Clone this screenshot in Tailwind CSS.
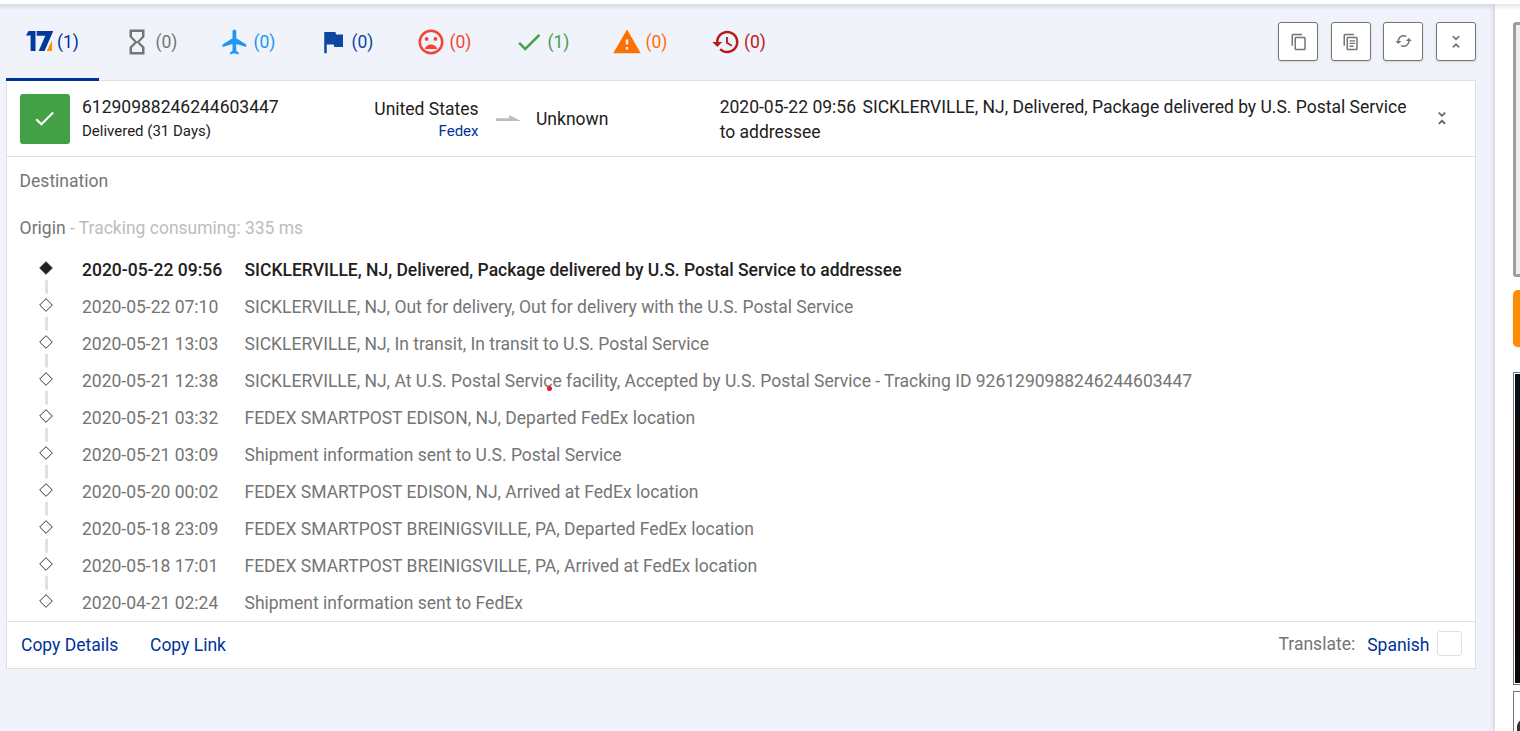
<!DOCTYPE html>
<html lang="en">
<head>
<meta charset="utf-8">
<title>17TRACK</title>
<script src="https://cdn.jsdelivr.net/npm/@tailwindcss/browser@4"></script>
</head>
<body class="h-[731px] w-[1520px] overflow-hidden bg-white pt-1 font-['Roboto',sans-serif] text-[17.5px] leading-[25px] text-[#212121]">
<div class="relative flex h-[727px] overflow-hidden">
  <div class="pointer-events-none absolute inset-x-0 top-0 z-10 h-[6px] bg-linear-to-b from-black/10 to-transparent"></div>
  <main class="w-[1495px] shrink-0 bg-[#f0f3fa] pl-[6px] pr-[19px]">
    <header class="flex h-[76px] justify-between">
      <nav class="flex">
        <div class="relative z-10 flex h-[77px] w-[93px] items-center border-b-[3px] border-[#003399] pl-5 text-[#003399]">
          <svg class="mr-[3px] h-[21px] w-[28px]" viewBox="0 0 28 21"><path fill="#003a9b" d="M2.500 0H9.500v20H4.600V4.600H0zM10.700 0H27.300L18.500 20H12.700L19.300 4.800H10.700z"/><path fill="#ff9100" d="M26 9.500V20H20.800z"/></svg>
          <span class="pt-[2px]">(1)</span>
        </div>
        <div class="ml-[23px] flex h-[77px] w-[98px] items-center gap-[3.5px] pb-[2px] text-[#757575]">
          <svg class="size-[30px]" viewBox="0 0 24 24" fill="currentColor"><path d="M6 2v6l4 4-4 4v6h12v-6l-4-4 4-4V2H6zm10 14.500V20H8v-3.500l4-4 4 4zm-4-5l-4-4V4h8v3.500l-4 4z"/></svg><span class="pt-[2px]">(0)</span>
        </div>
        <div class="flex h-[77px] w-[98px] items-center gap-[3.5px] pb-[2px] text-[#2196f3]">
          <svg class="size-[30px]" viewBox="0 0 24 24" fill="currentColor"><path d="M21 16v-2l-8-5V3.500c0-.83-.67-1.500-1.500-1.500S10 2.670 10 3.500V9l-8 5v2l8-2.500V19l-2 1.500V22l3.500-1 3.500 1v-1.500L13 19v-5.500l8 2.500z"/></svg><span class="pt-[2px]">(0)</span>
        </div>
        <div class="flex h-[77px] w-[98px] items-center gap-[3.5px] pb-[2px] text-[#0d47a1]">
          <svg class="size-[30px]" viewBox="0 0 24 24" fill="currentColor"><path d="M14.400 6L14 4H5v17h2v-7h5.600l.4 2h7V6z"/></svg><span class="pt-[2px]">(0)</span>
        </div>
        <div class="flex h-[77px] w-[98px] items-center gap-[3.5px] pb-[2px] text-[#f44336]">
          <svg class="size-[30px]" viewBox="0 0 24 24" fill="currentColor"><circle cx="12" cy="12" r="9" fill="none" stroke="currentColor" stroke-width="2"/><circle cx="15.500" cy="9.500" r="1.500"/><circle cx="8.500" cy="9.500" r="1.500"/><path d="M12 14c-2.330 0-4.310 1.460-5.110 3.500h10.220c-.8-2.040-2.780-3.500-5.110-3.500z"/></svg><span class="pt-[2px]">(0)</span>
        </div>
        <div class="flex h-[77px] w-[98px] items-center gap-[3.5px] pb-[2px] text-[#43a047]">
          <svg class="size-[30px]" viewBox="0 0 24 24" fill="currentColor"><path d="M9 16.170L4.830 12l-1.420 1.410L9 19 21 7l-1.410-1.410z"/></svg><span class="pt-[2px]">(1)</span>
        </div>
        <div class="flex h-[77px] w-[98px] items-center gap-[3.5px] pb-[2px] text-[#ff6f00]">
          <svg class="size-[30px]" viewBox="0 0 24 24" fill="currentColor"><path d="M1 21h22L12 2 1 21zm12-3h-2v-2h2v2zm0-4h-2v-4h2v4z"/></svg><span class="pt-[2px]">(0)</span>
        </div>
        <div class="ml-[.5px] flex h-[77px] w-[98px] items-center gap-[3.5px] pb-[2px] text-[#b71c1c]">
          <svg class="size-[30px]" viewBox="0 0 24 24" fill="currentColor"><path d="M13 3c-4.970 0-9 4.030-9 9H1l3.890 3.890.07.14L9 12H6c0-3.870 3.130-7 7-7s7 3.130 7 7-3.130 7-7 7c-1.930 0-3.680-.79-4.940-2.060l-1.420 1.420C8.270 19.990 10.510 21 13 21c4.970 0 9-4.030 9-9s-4.030-9-9-9zm-1 5v5l4.280 2.540.72-1.210-3.500-2.080V8H12z"/></svg><span class="pt-[2px]">(0)</span>
        </div>
      </nav>
      <div class="flex pt-[18px] text-[#757575]">
        <div class="mr-[13px] flex h-[39px] w-10 items-center justify-center rounded-[3px] border border-[#757575] bg-white pl-px shadow-sm"><svg class="size-[18px]" viewBox="0 0 24 24" fill="currentColor"><path d="M16 1H4c-1.100 0-2 .9-2 2v14h2V3h12V1zm3 4H8c-1.100 0-2 .9-2 2v14c0 1.100.9 2 2 2h11c1.100 0 2-.9 2-2V7c0-1.100-.9-2-2-2zm0 16H8V7h11v14z"/></svg></div>
        <div class="mr-3 flex h-[39px] w-10 items-center justify-center rounded-[3px] border border-[#757575] bg-white shadow-sm"><svg class="size-[18px]" viewBox="0 0 24 24" fill="currentColor"><path d="M16 1H4c-1.100 0-2 .9-2 2v14h2V3h12V1zm3 4H8c-1.100 0-2 .9-2 2v14c0 1.100.9 2 2 2h11c1.100 0 2-.9 2-2V7c0-1.100-.9-2-2-2zm0 16H8V7h11v14z"/><path d="M10 9.500h7.500v1.700H10zM10 13h7.500v1.700H10zM10 16.800h5.500v1.700H10z"/></svg></div>
        <div class="mr-[13px] flex h-[39px] w-10 items-center justify-center rounded-[3px] border border-[#757575] bg-white pb-px pl-px shadow-sm"><svg class="size-[18px]" viewBox="0 0 24 24" fill="currentColor"><g transform="translate(-.5 0)"><path d="M19 8l-4 4h3c0 3.310-2.690 6-6 6-1.010 0-1.970-.25-2.800-.7l-1.460 1.460C8.970 19.540 10.430 20 12 20c4.420 0 8-3.580 8-8h3l-4-4zM6 12c0-3.310 2.690-6 6-6 1.010 0 1.970.25 2.800.7l1.460-1.460C15.030 4.460 13.570 4 12 4c-4.420 0-8 3.580-8 8H1l4 4 4-4H6z"/></g></svg></div>
        <div class="flex h-[39px] w-10 items-center justify-center rounded-[3px] border border-[#757575] bg-white shadow-sm"><svg class="size-[18px]" viewBox="0 0 18 18" fill="none" stroke="currentColor" stroke-width="1.700"><path d="M5.800 3.200L9 6.300l3.200-3.100M5.800 14.400L9 11.300l3.200 3.100"/></svg></div>
      </div>
    </header>

    <section class="h-[589px] border border-[#e0e0e0] bg-white">
      <div class="flex h-[76px] border-b border-[#e0e0e0] pl-[13px]">
        <div class="mt-[13px] flex size-[50px] items-center justify-center rounded-[3px] bg-[#43a047] pb-px pr-px"><svg class="size-[25px]" viewBox="0 0 24 24" fill="#fff"><path d="M9 16.170L4.830 12l-1.420 1.410L9 19 21 7l-1.410-1.410z"/></svg></div>
        <div class="ml-3 w-[240px] pt-[14px]">
          <div>61290988246244603447</div>
          <div class="text-[15px] leading-[23px]">Delivered (31 Days)</div>
        </div>
        <div class="w-[156.5px] pt-[16px] text-right">
          <div>United States</div>
          <div class="text-[15px] leading-[19px] text-[#003399]">Fedex</div>
        </div>
        <svg class="ml-[17.5px] mt-[33px] h-[8px] w-[25px]" viewBox="0 0 25 8" fill="#bdbdbd"><path d="M0 4.300H13V1L25 7H0z"/></svg>
        <div class="ml-[15px] w-[183.7px] pt-[26px]">Unknown</div>
        <div class="w-[700px] pt-[14px]"><span class="mr-[6.6px]">2020-05-22 09:56</span>SICKLERVILLE, NJ, Delivered, Package delivered by U.S. Postal Service<br>to addressee</div>
        <svg class="ml-[13.3px] mt-[28px] size-[18px] shrink-0" viewBox="0 0 18 18" fill="none" stroke="#616161" stroke-width="1.700"><path d="M5.800 3.700L9 6.800l3.200-3.100M5.800 14.900L9 11.800l3.200 3.100"/></svg>
      </div>

      <div class="h-[464px] pl-[12.6px] pt-[12px] text-[#757575]">
        <div>Destination</div>
        <div class="mt-[22px]">Origin <span class="text-[#bdbdbd]">- Tracking consuming: 335 ms</span></div>
        <ol id="events" class="mt-5"></ol>
      </div>

      <footer class="flex h-[47px] items-center border-t border-[#e0e0e0] pl-[14px] pr-[13px] text-[#003399]">
        <span class="w-[129px]">Copy Details</span>
        <span>Copy Link</span>
        <span class="ml-auto mr-3 pb-[2px] text-[#757575]">Translate:</span>
        <span>Spanish</span>
        <span class="mb-[3px] ml-[7.5px] size-[25px] rounded-[3px] border border-[#e0e0e0]"></span>
      </footer>
    </section>
  </main>

  <aside class="flex w-[25px] shrink-0 flex-col pl-[18px] pt-[18px] shadow-[0_0_6px_rgba(0,0,0,0.22)]">
    <div class="h-[255px] w-[40px] shrink-0 rounded-[3px] border-[3px] border-[#9e9e9e] bg-[#eeeeee]"></div>
    <div class="mt-[13px] h-[57px] w-[40px] shrink-0 rounded-[5px] bg-[#ff8c00] shadow"></div>
    <div class="mt-[25px] h-[313px] w-[40px] shrink-0 border border-[#757575] p-px"><div class="h-full bg-linear-to-b from-[#001018] from-0% via-[#180000] via-50% to-[#080810] to-100%"></div></div>
    <div class="mt-[6px] h-[40px] w-[40px] shrink-0 overflow-hidden border border-b-0 border-[#757575] pl-[3px] pt-[27px]"><div class="h-[12px] rounded-tl-lg bg-[#333]"></div></div>
  </aside>
  <div class="absolute left-[547px] top-[381.5px] size-[5px] rounded-full bg-[#ed1c24]"></div>
</div>
<script>
const events = [
  ["2020-05-22 09:56", "SICKLERVILLE, NJ, Delivered, Package delivered by U.S. Postal Service to addressee"],
  ["2020-05-22 07:10", "SICKLERVILLE, NJ, Out for delivery, Out for delivery with the U.S. Postal Service"],
  ["2020-05-21 13:03", "SICKLERVILLE, NJ, In transit, In transit to U.S. Postal Service"],
  ["2020-05-21 12:38", "SICKLERVILLE, NJ, At U.S. Postal Service facility, Accepted by U.S. Postal Service - Tracking ID 9261290988246244603447"],
  ["2020-05-21 03:32", "FEDEX SMARTPOST EDISON, NJ, Departed FedEx location"],
  ["2020-05-21 03:09", "Shipment information sent to U.S. Postal Service"],
  ["2020-05-20 00:02", "FEDEX SMARTPOST EDISON, NJ, Arrived at FedEx location"],
  ["2020-05-18 23:09", "FEDEX SMARTPOST BREINIGSVILLE, PA, Departed FedEx location"],
  ["2020-05-18 17:01", "FEDEX SMARTPOST BREINIGSVILLE, PA, Arrived at FedEx location"],
  ["2020-04-21 02:24", "Shipment information sent to FedEx"]
];
document.getElementById("events").innerHTML = events.map(([time, text], i) => `
  <li class="flex h-[37px] items-start whitespace-nowrap ${i === 0 ? "font-medium text-[#212121]" : ""}">
    <svg class="ml-[19px] mr-[29.4px] h-[37px] w-[14px] shrink-0" viewBox="0 0 14 37">
      <path d="M7 .7L13.300 7 7 13.300.7 7z" stroke="#333" stroke-width="1" fill="${i === 0 ? "#212121" : "#fff"}"/>
      ${i < events.length - 1 ? '<path d="M6 19.500L9 18.500V33L6 32z" fill="#e0e0e0"/>' : ""}
    </svg>
    <span class="-mt-[3px] w-[162.5px] shrink-0">${time}</span>
    <span class="-mt-[3px]">${text}</span>
  </li>`).join("");
</script>
</body>
</html>
